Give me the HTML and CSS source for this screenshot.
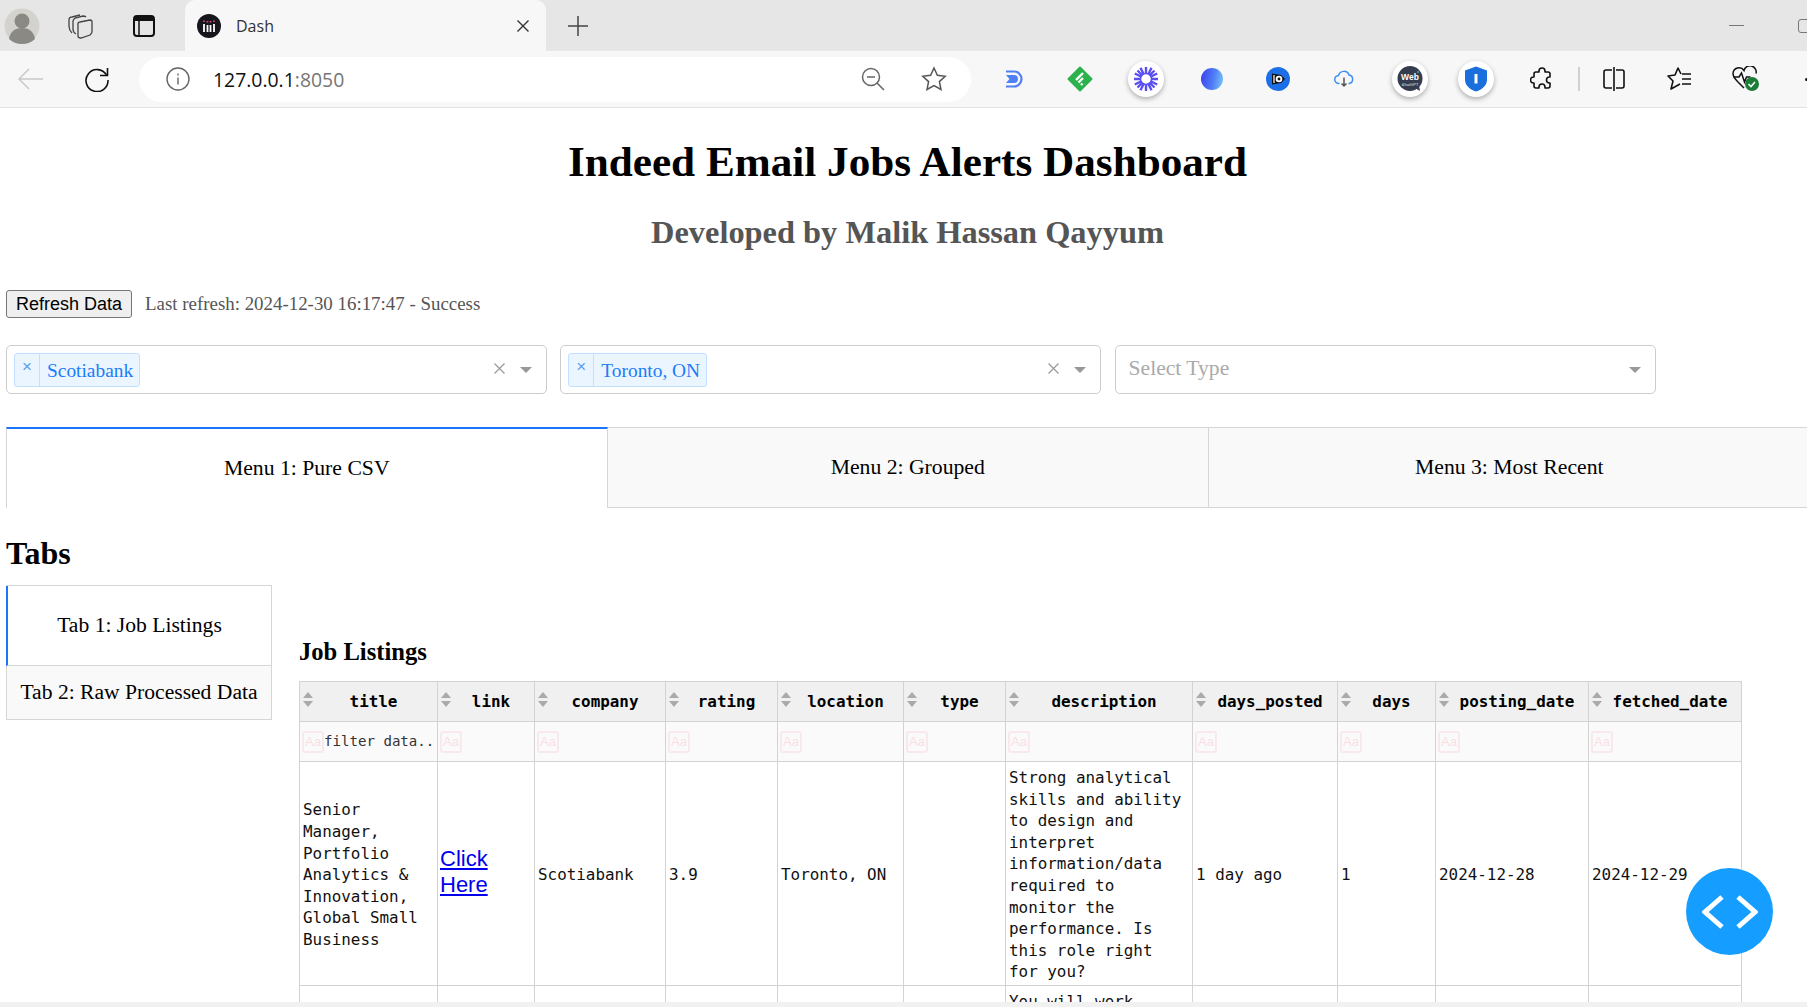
FILE: index.html
```html
<!DOCTYPE html>
<html lang="en">
<head>
    <meta charset="UTF-8">
    <meta name="viewport" content="width=device-width, initial-scale=1.0">
    <title>Dash</title>
    <link rel="stylesheet" href="styles.css">
</head>
<body>
    <!-- browser chrome -->
    <div class="tab-strip">
        <div class="strip-btn avatar">
            <svg width="36" height="36" viewBox="0 0 36 36"><circle cx="18" cy="18" r="17.500" fill="#d3d2cd"/><circle cx="18" cy="13" r="7.500" fill="#8a8984"/><path d="M5 31c1-8 7-11 13-11s12 3 13 11c-3 3-8 5-13 5s-10-2-13-5z" fill="#8a8984"/></svg>
        </div>
        <div class="strip-btn collections">
            <svg width="28" height="28" viewBox="0 0 28 28" fill="none" stroke="#444" stroke-width="1.300"><path d="M5 21c-2-2-3-4-3-7V8c0-2 1-3 3-3l8-2"/><path d="M9 22c-2-1-3-3-3-5V9c0-1 1-2 2-3l8-2c1 0 2 0 3 1"/><path d="M11 12c0-1 1-2 2-2l10-2c1 0 2 1 2 2v10c0 1-1 2-2 3l-9 3c-2 0-3-1-3-2z"/></svg>
        </div>
        <div class="strip-btn vtabs">
            <svg width="24" height="24" viewBox="0 0 24 24"><rect x="2" y="2" width="20" height="20" rx="3" fill="none" stroke="#111" stroke-width="2"/><path d="M2 5a3 3 0 0 1 3-3h14a3 3 0 0 1 3 3v2H2z" fill="#111"/><path d="M7 7v15" stroke="#111" stroke-width="1.500"/></svg>
        </div>
        <div class="browser-tab">
            <svg class="favicon" width="24" height="24" viewBox="0 0 24 24"><circle cx="12" cy="12" r="12" fill="#16161d"/><path d="M7 10v8M10.500 11v7M13.500 11v7M17 10v8" stroke="#fff" stroke-width="1.800"/><path d="M7 6.500v1.500M10.500 7v1.500M13.500 7v1.500M17 6.500v1.500" stroke="#e8457c" stroke-width="1.600"/></svg>
            <span class="tab-title">Dash</span>
            <svg class="tab-close" width="14" height="14" viewBox="0 0 14 14"><path d="M1.500 1.500l11 11M12.500 1.500l-11 11" stroke="#333" stroke-width="1.400"/></svg>
        </div>
        <div class="new-tab">
            <svg width="22" height="22" viewBox="0 0 22 22"><path d="M11 1v20M1 11h20" stroke="#444" stroke-width="1.500"/></svg>
        </div>
        <div class="window-btns">
            <span class="win-min"></span>
            <span class="win-restore"></span>
        </div>
    </div>

    <div class="toolbar">
        <div class="nav-btn nav-back">
            <svg width="26" height="24" viewBox="0 0 26 24" fill="none" stroke="#c9c9c9" stroke-width="1.500"><path d="M25 12H1M11 2L1 12l10 10"/></svg>
        </div>
        <div class="nav-btn">
            <svg width="26" height="26" viewBox="0 0 26 26" fill="none" stroke="#111" stroke-width="1.600"><path d="M22.500 9A11 11 0 1 0 24 14"/><path d="M23.500 2v7.500H16"/></svg>
        </div>
        <div class="address-bar">
            <svg class="info-icon" width="24" height="24" viewBox="0 0 24 24" fill="none" stroke="#666" stroke-width="1.400"><circle cx="12" cy="12" r="11"/><path d="M12 10.500v7"/><path d="M12 6.500v2"/></svg>
            <span class="url"><span class="url-host">127.0.0.1</span>:8050</span>
            <svg class="addr-icon" width="24" height="24" viewBox="0 0 24 24" fill="none" stroke="#666" stroke-width="1.500"><circle cx="10" cy="10" r="8.500"/><path d="M6 10h8M16 16l7 7"/></svg>
            <svg class="addr-icon" width="26" height="26" viewBox="0 0 26 26" fill="none" stroke="#555" stroke-width="1.500"><path d="M13 2l3.400 7.300 7.800.9-5.800 5.400 1.600 7.900L13 19.600l-7 3.900 1.600-7.900L1.800 10.200l7.800-.9z"/></svg>
        </div>
        <div class="ext-icons">
            <div class="ext">
                <svg width="20" height="20" viewBox="0 0 20 20" fill="none"><path d="M2 2.500h8a7.500 7.500 0 0 1 0 15H2" stroke="#4f7ff5" stroke-width="2.200"/><path d="M2 6h8a4 4 0 0 1 0 8H2l3.500-4z" fill="#4f7ff5"/></svg>
            </div>
            <div class="ext">
                <svg width="26" height="26" viewBox="0 0 26 26"><path d="M13 1.500L24.500 13 13 24.500 1.500 13z" fill="#2bb24c" stroke="#2bb24c" stroke-width="2" stroke-linejoin="round"/><path d="M9 14l7-7M11.500 16.500l4.500-4.500M14 19l1.500-1.500" stroke="#fff" stroke-width="2.400" fill="none"/></svg>
            </div>
            <div class="ext ext-badge">
                <svg width="26" height="26" viewBox="0 0 26 26" stroke="#5a4ff2" stroke-width="2.400"><path d="M13 1v24M1 13h24M4.500 4.500l17 17M21.500 4.500l-17 17M7.500 1.800l11 22.400M18.500 1.800l-11 22.400M1.800 7.500l22.400 11M24.200 7.500L1.800 18.500"/><circle cx="13" cy="13" r="5.500" fill="#fff" stroke="#5a4ff2" stroke-width="1.500"/></svg>
            </div>
            <div class="ext">
                <span class="orb"></span>
            </div>
            <div class="ext">
                <svg width="24" height="24" viewBox="0 0 24 24"><circle cx="12" cy="12" r="12" fill="#1d6fe8"/><path d="M6 6.500L15 8l4 4-4 4-9 1.500z" fill="#111"/><path d="M8 8v8" stroke="#fff" stroke-width="1.200"/><circle cx="13" cy="12" r="3.300" fill="#fff"/><circle cx="13" cy="12" r="1.400" fill="#111"/></svg>
            </div>
            <div class="ext">
                <svg width="20" height="18" viewBox="0 0 20 18" fill="none" stroke="#3f8ef5" stroke-width="1.500"><path d="M5.500 13.500H5a4 4 0 0 1-.5-8A5.500 5.500 0 0 1 15 5a4.300 4.300 0 0 1 0 8.500h-.5"/><path d="M10 7.500v8M7.500 13.500L10 16l2.500-2.500" stroke="#555"/></svg>
            </div>
            <div class="ext ext-badge">
                <svg width="26" height="26" viewBox="0 0 26 26"><circle cx="13" cy="12.500" r="12.500" fill="#343c4e"/><path d="M18 22l5 3-1-6z" fill="#343c4e"/><circle cx="6" cy="19" r="1" fill="#3da6a8"/><circle cx="21" cy="6" r="1" fill="#3da6a8"/><text x="13" y="14" text-anchor="middle" class="web-mark">Web</text><text x="13" y="19.500" text-anchor="middle" class="web-sub">ChatGPT</text></svg>
            </div>
            <div class="ext ext-badge">
                <svg width="24" height="26" viewBox="0 0 24 26"><path d="M12 .500L23 4.500v9c0 6-5 10-11 12C6 23.500 1 19.500 1 13.500v-9z" fill="#1a6fdc"/><path d="M12 8v9.500" stroke="#fff" stroke-width="3"/></svg>
            </div>
            <div class="ext">
                <svg width="24" height="24" viewBox="0 0 24 24" fill="none" stroke="#111" stroke-width="1.600" stroke-linejoin="round"><path d="M9 4a3 3 0 0 1 6 0v1h3a2 2 0 0 1 2 2v3h-.500a3 3 0 0 0 0 6h.500v3a2 2 0 0 1-2 2h-3v-1a3 3 0 0 0-6 0v1H6a2 2 0 0 1-2-2v-3H3.500a3 3 0 0 1 0-6H4V7a2 2 0 0 1 2-2h3z"/></svg>
            </div>
            <span class="tool-divider"></span>
            <div class="ext ext-split">
                <svg width="24" height="24" viewBox="0 0 24 24" fill="none" stroke="#111" stroke-width="1.600"><path d="M10 3H4a2 2 0 0 0-2 2v14a2 2 0 0 0 2 2h6M14 3h6a2 2 0 0 1 2 2v14a2 2 0 0 1-2 2h-6"/><path d="M12 0v24"/></svg>
            </div>
            <div class="ext">
                <svg width="26" height="24" viewBox="0 0 26 24" fill="none" stroke="#111" stroke-width="1.600" stroke-linejoin="round"><path d="M13 17L4 22l2-8-5-5 7-1 3-7 3 6"/><path d="M15 7h9M15 12h9M15 17h9"/></svg>
            </div>
            <div class="ext health">
                <svg width="28" height="26" viewBox="0 0 28 26" fill="none" stroke="#111" stroke-width="1.500"><path d="M6 16C3 13 1 11 1 7.500A6 6 0 0 1 12 4.500 6 6 0 0 1 24 7.500"/><path d="M1.500 11H7l2.500-4 3 9 2-5h4"/><path d="M6 16l6 6"/><circle cx="20" cy="18" r="7" fill="#1c7d36" stroke="none"/><path d="M16.500 18l2.500 2.500 4-4.500" stroke="#fff" stroke-width="1.600"/></svg>
            </div>
            <div class="ext">
                <span class="more-dots"><i></i><i></i><i></i></span>
            </div>
        </div>
    </div>

    <!-- dash app -->
    <div class="viewport">
        <div class="page">
            <h1 class="app-title">Indeed Email Jobs Alerts Dashboard</h1>
            <h2 class="app-subtitle">Developed by Malik Hassan Qayyum</h2>

            <div class="refresh-row">
                <button class="refresh-btn">Refresh Data</button>
                <span class="refresh-status">Last refresh: 2024-12-30 16:17:47 - Success</span>
            </div>

            <div class="filters">
                <div class="dropdown">
                    <span class="chip"><span class="chip-x">×</span><span class="chip-label">Scotiabank</span></span>
                    <svg class="dd-clear" width="11" height="11" viewBox="0 0 11 11"><path d="M.5.5l10 10M10.500.5l-10 10" stroke="#999" stroke-width="1.200"/></svg>
                    <span class="dd-arrow"></span>
                </div>
                <div class="dropdown">
                    <span class="chip"><span class="chip-x">×</span><span class="chip-label">Toronto, ON</span></span>
                    <svg class="dd-clear" width="11" height="11" viewBox="0 0 11 11"><path d="M.5.5l10 10M10.500.5l-10 10" stroke="#999" stroke-width="1.200"/></svg>
                    <span class="dd-arrow"></span>
                </div>
                <div class="dropdown">
                    <span class="dd-placeholder">Select Type</span>
                    <span class="dd-arrow"></span>
                </div>
            </div>

            <div class="menu-tabs">
                <div class="menu-tab active">Menu 1: Pure CSV</div>
                <div class="menu-tab">Menu 2: Grouped</div>
                <div class="menu-tab">Menu 3: Most Recent</div>
            </div>

            <h3 class="tabs-heading">Tabs</h3>

            <div class="tabs-layout">
                <div class="side-tabs">
                    <div class="side-tab active">Tab 1: Job Listings</div>
                    <div class="side-tab">Tab 2: Raw Processed Data</div>
                </div>
                <div class="tab-content">
                    <h4 class="content-title">Job Listings</h4>
                    <table class="jobs-table">
                        <colgroup>
                            <col class="c-title"><col class="c-link"><col class="c-company"><col class="c-rating"><col class="c-location"><col class="c-type"><col class="c-desc"><col class="c-posted"><col class="c-days"><col class="c-date"><col class="c-date">
                        </colgroup>
                        <thead>
                            <tr class="head-row">
                                <th><div class="th-inner"><span class="sort"></span><span class="th-label">title</span></div></th>
                                <th><div class="th-inner"><span class="sort"></span><span class="th-label">link</span></div></th>
                                <th><div class="th-inner"><span class="sort"></span><span class="th-label">company</span></div></th>
                                <th><div class="th-inner"><span class="sort"></span><span class="th-label">rating</span></div></th>
                                <th><div class="th-inner"><span class="sort"></span><span class="th-label">location</span></div></th>
                                <th><div class="th-inner"><span class="sort"></span><span class="th-label">type</span></div></th>
                                <th><div class="th-inner"><span class="sort"></span><span class="th-label">description</span></div></th>
                                <th><div class="th-inner"><span class="sort"></span><span class="th-label">days_posted</span></div></th>
                                <th><div class="th-inner"><span class="sort"></span><span class="th-label">days</span></div></th>
                                <th><div class="th-inner"><span class="sort"></span><span class="th-label">posting_date</span></div></th>
                                <th><div class="th-inner"><span class="sort"></span><span class="th-label">fetched_date</span></div></th>
                            </tr>
                            <tr class="filter-row">
                                <td><div class="filter-inner"><span class="case-toggle">Aa</span><span class="filter-hint">filter data..</span></div></td>
                                <td><div class="filter-inner"><span class="case-toggle">Aa</span></div></td>
                                <td><div class="filter-inner"><span class="case-toggle">Aa</span></div></td>
                                <td><div class="filter-inner"><span class="case-toggle">Aa</span></div></td>
                                <td><div class="filter-inner"><span class="case-toggle">Aa</span></div></td>
                                <td><div class="filter-inner"><span class="case-toggle">Aa</span></div></td>
                                <td><div class="filter-inner"><span class="case-toggle">Aa</span></div></td>
                                <td><div class="filter-inner"><span class="case-toggle">Aa</span></div></td>
                                <td><div class="filter-inner"><span class="case-toggle">Aa</span></div></td>
                                <td><div class="filter-inner"><span class="case-toggle">Aa</span></div></td>
                                <td><div class="filter-inner"><span class="case-toggle">Aa</span></div></td>
                            </tr>
                        </thead>
                        <tbody>
                            <tr>
                                <td>Senior Manager, Portfolio Analytics &amp; Innovation, Global Small Business</td>
                                <td class="link-cell"><a href="#">Click Here</a></td>
                                <td>Scotiabank</td>
                                <td>3.9</td>
                                <td>Toronto, ON</td>
                                <td></td>
                                <td>Strong analytical skills and ability to design and interpret information/data required to monitor the performance. Is this role right for you?</td>
                                <td>1 day ago</td>
                                <td>1</td>
                                <td>2024-12-28</td>
                                <td>2024-12-29</td>
                            </tr>
                            <tr>
                                <td></td><td></td><td></td><td></td><td></td><td></td>
                                <td class="desc-top">You will work</td>
                                <td></td><td></td><td></td><td></td>
                            </tr>
                        </tbody>
                    </table>
                </div>
            </div>
        </div>

        <div class="float-btn">
            <svg width="56" height="34" viewBox="0 0 56 34" fill="none" stroke="#fff" stroke-width="5"><path d="M20 2L3 17l17 15M36 2l17 15-17 15"/></svg>
        </div>
    </div>
</body>
</html>
```

FILE: styles.css
```css
* {
    box-sizing: border-box;
}
html, body {
    margin: 0;
    padding: 0;
    height: 100%;
    overflow: hidden;
}
body {
    background-color: #f1f1f1;
    font-family: 'Liberation Serif', serif;
    display: flex;
    flex-direction: column;
    height: 1007px;
}

/* browser chrome */
.tab-strip {
    height: 51px;
    flex: none;
    background-color: #e6e6e6;
    display: flex;
    align-items: center;
    position: relative;
}
.strip-btn {
    display: flex;
    align-items: center;
    justify-content: center;
}
.avatar {
    width: 36px;
    margin-left: 4px;
}
.collections {
    width: 28px;
    margin-left: 27px;
}
.vtabs {
    width: 24px;
    margin-left: 37px;
}
.browser-tab {
    width: 361px;
    height: 51px;
    margin-left: 29px;
    background-color: #f7f7f7;
    border-radius: 10px 10px 0 0;
    display: flex;
    align-items: center;
    padding: 0 16px 0 12px;
}
.tab-title {
    margin-left: 15px;
    font-family: 'Open Sans', sans-serif;
    font-size: 16px;
    color: #333;
    flex: 1;
}
.new-tab {
    margin-left: 21px;
    display: flex;
}
.window-btns {
    margin-left: auto;
    display: flex;
    align-items: center;
    gap: 54px;
    margin-right: -6px;
}
.win-min {
    width: 15px;
    height: 1px;
    background-color: #777;
}
.win-restore {
    width: 15px;
    height: 14px;
    border: 1.5px solid #777;
    border-radius: 3px;
}
.toolbar {
    height: 57px;
    flex: none;
    background-color: #f7f7f7;
    border-bottom: 1px solid #e2e2e2;
    display: flex;
    align-items: center;
}
.nav-btn {
    width: 66px;
    flex: none;
    display: flex;
    justify-content: center;
}
.nav-back {
    margin-left: -2px;
}
.address-bar {
    width: 832px;
    height: 45px;
    flex: none;
    margin-left: 9px;
    background-color: #fff;
    border-radius: 23px;
    display: flex;
    align-items: center;
    padding: 0 24px 0 27px;
}
.url {
    margin-left: 23px;
    font-family: 'Open Sans', sans-serif;
    font-size: 19.4px;
    color: #767676;
    flex: 1;
}
.url-host {
    color: #111;
}
.addr-icon {
    margin-left: 36px;
}
.ext-icons {
    display: flex;
    flex: none;
    align-items: center;
    margin-left: 10px;
}
.ext {
    width: 66px;
    height: 40px;
    flex: none;
    display: flex;
    align-items: center;
    justify-content: center;
}
.ext-badge {
    position: relative;
}
.ext-badge::before {
    content: "";
    position: absolute;
    left: 15px;
    top: 2px;
    width: 36px;
    height: 36px;
    border-radius: 50%;
    background-color: #fff;
    box-shadow: 0 2px 5px rgba(0,0,0,0.3);
}
.ext-badge svg {
    position: relative;
}
.orb {
    width: 22px;
    height: 22px;
    border-radius: 50%;
    background: linear-gradient(100deg, #3b3ff0, #4f7df5 55%, #7cc8fb);
}
.web-mark {
    font-family: 'Liberation Sans', sans-serif;
    font-size: 8.5px;
    font-weight: bold;
    fill: #fff;
}
.web-sub {
    font-family: 'Liberation Sans', sans-serif;
    font-size: 4px;
    fill: #dfe3ea;
}
.tool-divider {
    width: 2px;
    height: 24px;
    flex: none;
    background-color: #d0d0d0;
    margin-left: 3px;
    margin-right: -2px;
}
.ext-split {
    margin-left: 3px;
}
.more-dots {
    display: flex;
    gap: 4px;
    margin-left: 3px;
}
.more-dots i {
    width: 3px;
    height: 3px;
    flex: none;
    border-radius: 50%;
    background-color: #111;
}

/* page */
.viewport {
    height: 894px;
    flex: none;
    background-color: #fff;
    overflow: hidden;
    position: relative;
}
.page {
    width: 1815px;
    padding: 0 6px;
}
.app-title {
    margin: 30px 0 0;
    font-size: 43.2px;
    line-height: 48px;
    text-align: center;
    color: #000;
}
.app-subtitle {
    margin: 28px 0 0;
    font-size: 32.4px;
    line-height: 36px;
    text-align: center;
    color: #555;
}
.refresh-row {
    margin-top: 40px;
    display: flex;
    align-items: center;
}
.refresh-btn {
    width: 126px;
    height: 28px;
    padding: 0;
    font-family: 'Liberation Sans', sans-serif;
    font-size: 18px;
    color: #000;
    background-color: #efefef;
    border: 1px solid #767676;
    border-radius: 3px;
}
.refresh-status {
    margin-left: 13px;
    font-size: 18.9px;
    color: #555;
}
.filters {
    margin-top: 27px;
    display: flex;
    gap: 13.3px;
}
.dropdown {
    width: 541px;
    height: 49px;
    border: 1px solid #ccc;
    border-radius: 5px;
    background-color: #fff;
    display: flex;
    align-items: center;
    padding: 0 14px 0 7px;
}
.chip {
    height: 34px;
    margin-top: 1px;
    display: flex;
    background-color: #ebf5ff;
    border: 1px solid #c2e0ff;
    border-radius: 3px;
    color: #1a7cf8;
    font-size: 19.4px;
}
.chip-x {
    width: 25px;
    border-right: 1px solid #c2e0ff;
    text-align: center;
    font-family: 'Liberation Sans', sans-serif;
    font-size: 17px;
    line-height: 26px;
    color: #5f9df5;
}
.chip-label {
    padding: 0 6px 0 7px;
    line-height: 33px;
}
.dd-clear {
    margin-left: auto;
    margin-top: -2px;
}
.dd-arrow {
    width: 0;
    height: 0;
    margin-left: 15px;
    border-style: solid;
    border-width: 6px 6px 0;
    border-color: #999 transparent transparent;
}
.dd-placeholder {
    margin-left: 6px;
    margin-right: auto;
    font-size: 21.6px;
    color: #aaa;
    margin-top: -3px;
}
.menu-tabs {
    margin-top: 33px;
    display: flex;
}
.menu-tab {
    width: 601.5px;
    height: 81px;
    flex: none;
    display: flex;
    align-items: center;
    justify-content: center;
    font-size: 21.7px;
    color: #000;
    background-color: #f9f9f9;
    border: 1px solid #d6d6d6;
    border-left: none;
}
.menu-tab.active {
    background-color: #fff;
    border-top: 2px solid #1975fa;
    border-left: 1px solid #d6d6d6;
    border-bottom: none;
}
.tabs-heading {
    margin: 27px 0 0;
    font-size: 32px;
    line-height: 36px;
    color: #000;
}
.tabs-layout {
    margin-top: 14px;
    display: flex;
    gap: 27px;
    align-items: flex-start;
}
.side-tabs {
    width: 266px;
    flex: none;
    border: 1px solid #d6d6d6;
    border-left: none;
}
.side-tab {
    height: 53px;
    display: flex;
    align-items: center;
    justify-content: center;
    font-size: 21.6px;
    color: #000;
    background-color: #f9f9f9;
    border-left: 1px solid #d6d6d6;
}
.side-tab.active {
    height: 80px;
    background-color: #fff;
    border-left: 2px solid #1975fa;
    border-bottom: 1px solid #d6d6d6;
}
.tab-content {
    padding-top: 53px;
}
.content-title {
    margin: 0 0 15px;
    font-size: 24.6px;
    line-height: 28px;
    color: #000;
}

/* table */
.jobs-table {
    border-collapse: collapse;
    table-layout: fixed;
    width: 1442px;
    font-family: 'DejaVu Sans Mono', monospace;
    font-size: 15.9px;
    line-height: 21.6px;
    color: #222;
}
.c-title { width: 138px; }
.c-link { width: 97px; }
.c-company { width: 131px; }
.c-rating { width: 112px; }
.c-location { width: 126px; }
.c-type { width: 102px; }
.c-desc { width: 187px; }
.c-posted { width: 145px; }
.c-days { width: 98px; }
.c-date { width: 153px; }
.jobs-table th, .jobs-table td {
    border: 1px solid #d3d3d3;
    padding: 3px;
    vertical-align: middle;
    text-align: left;
    overflow-wrap: break-word;
}
.head-row th {
    height: 40px;
    background-color: #f0f0f0;
    color: #000;
    font-weight: bold;
}
.th-inner {
    display: flex;
    align-items: center;
}
.sort {
    width: 10px;
    height: 15px;
    flex: none;
    margin-top: -5px;
    position: relative;
}
.sort::before, .sort::after {
    content: "";
    position: absolute;
    left: 0;
    border-style: solid;
    border-color: transparent;
}
.sort::before {
    top: 0;
    border-width: 0 5px 6px;
    border-bottom-color: #aaa;
}
.sort::after {
    bottom: 0;
    border-width: 6px 5px 0;
    border-top-color: #aaa;
}
.th-label {
    flex: 1;
    text-align: center;
}
.filter-row td {
    height: 40px;
    background-color: #fafafa;
    padding: 0 0 0 2px;
}
.filter-inner {
    display: flex;
    align-items: center;
}
.case-toggle {
    width: 22px;
    height: 22px;
    flex: none;
    border: 2px solid #f9e8ec;
    border-radius: 3px;
    font-family: 'Liberation Sans', sans-serif;
    font-size: 13px;
    line-height: 18px;
    text-align: center;
    color: #fbdfe5;
}
.filter-hint {
    font-size: 14.1px;
    white-space: nowrap;
    color: #333;
}
.jobs-table tbody td {
    padding: 5px 3px 2px;
    background-color: #fff;
    color: #111;
}
.jobs-table tbody td.link-cell {
    padding: 3px 3px 5px 2px;
    font-family: 'Liberation Sans', sans-serif;
    font-size: 22px;
    line-height: 26px;
}
.link-cell a {
    color: #0000ee;
}
.jobs-table td.desc-top {
    vertical-align: top;
    height: 60px;
}

.float-btn {
    position: absolute;
    left: 1686px;
    top: 760px;
    width: 87px;
    height: 87px;
    border-radius: 50%;
    background-color: #159eff;
    display: flex;
    align-items: center;
    justify-content: center;
}
```
